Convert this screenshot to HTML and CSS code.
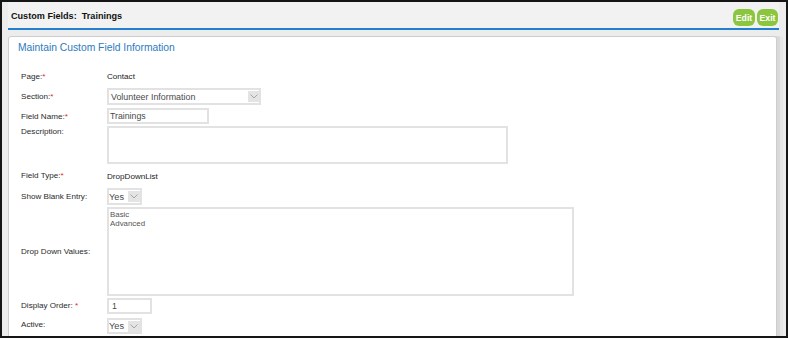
FILE: index.html
```html
<!DOCTYPE html>
<html>
<head>
<meta charset="utf-8">
<link rel="stylesheet" href="styles.css">
</head>
<body>
<div class="frame">
  <div class="header">
    <div class="header-title">Custom Fields:&nbsp; Trainings</div>
    <div class="header-actions">
      <span class="btn btn-edit">Edit</span>
      <span class="btn btn-exit">Exit</span>
    </div>
  </div>
  <div class="panel">
    <div class="panel-title">Maintain Custom Field Information</div>
    <div class="form">
      <div class="label">Page:<span class="req">*</span></div>
      <div class="value v-text">Contact</div>

      <div class="label">Section:<span class="req">*</span></div>
      <div class="value v-select"><div class="select select-wide"><span class="sel-text">Volunteer Information</span><span class="arrow"><svg width="8" height="5" viewBox="0 0 8 5"><path d="M0.5 0.5 L4 4 L7.5 0.5" fill="none" stroke="#a5a5a5" stroke-width="1"/></svg></span></div></div>

      <div class="label">Field Name:<span class="req">*</span></div>
      <div class="value v-name"><div class="input input-name">Trainings</div></div>

      <div class="label label-top">Description:</div>
      <div class="value v-desc"><div class="textarea desc"></div></div>

      <div class="label">Field Type:<span class="req">*</span></div>
      <div class="value v-text v-type">DropDownList</div>

      <div class="label">Show Blank Entry:</div>
      <div class="value v-select"><div class="select select-small"><span class="sel-text">Yes</span><span class="arrow"><svg width="8" height="5" viewBox="0 0 8 5"><path d="M0.5 0.5 L4 4 L7.5 0.5" fill="none" stroke="#a5a5a5" stroke-width="1"/></svg></span></div></div>

      <div class="label">Drop Down Values:</div>
      <div class="value v-list"><div class="textarea values">Basic<br>Advanced</div></div>

      <div class="label">Display Order:&nbsp;<span class="req">*</span></div>
      <div class="value v-order"><div class="input input-order">1</div></div>

      <div class="label">Active:</div>
      <div class="value v-active"><div class="select select-small select-short"><span class="sel-text">Yes</span><span class="arrow"><svg width="8" height="5" viewBox="0 0 8 5"><path d="M0.5 0.5 L4 4 L7.5 0.5" fill="none" stroke="#a5a5a5" stroke-width="1"/></svg></span></div></div>
    </div>
  </div>
</div>
</body>
</html>
```
FILE: styles.css
```css
* { box-sizing: border-box; }
html, body { margin: 0; padding: 0; }
body {
  width: 789px;
  height: 339px;
  font-family: "Liberation Sans", Arial, sans-serif;
  background: #fff;
  overflow: hidden;
}
.frame {
  width: 788px;
  height: 338px;
  border: 2px solid #151515;
  background: #ececec;
  overflow: hidden;
}
.header {
  height: 28px;
  margin: 0 7px 0 6px;
  display: flex;
  align-items: flex-start;
  justify-content: space-between;
  border-bottom: 2px solid #2280d0;
  background: #f2f2f2;
  padding: 0 1px 0 3px;
}
.header-title {
  font-size: 9.1px;
  font-weight: bold;
  color: #111;
  line-height: 10px;
  margin-top: 9px;
}
.header-actions {
  display: flex;
  gap: 2px;
  margin-top: 7px;
}
.btn {
  display: inline-flex;
  align-items: center;
  justify-content: center;
  height: 17px;
  background: #8cc63f;
  color: #fff;
  font-size: 8.7px;
  font-weight: bold;
  border-radius: 6px;
}
.btn-edit { width: 22px; }
.btn-exit { width: 21px; }
.panel {
  margin: 6px 9px 0 6px;
  background: #fff;
  border: 1px solid #cdcdcd;
  border-radius: 3px;
  box-shadow: 3px 0 0 #d9d9d9, 6px 0 0 #e6e6e6;
  height: 320px;
  padding: 4px 0 0 9px;
}
.panel-title {
  font-size: 10.3px;
  color: #2b7bc0;
  height: 14px;
  line-height: 14px;
  margin-bottom: 12px;
}
.form {
  display: grid;
  grid-template-columns: 86px 1fr;
  padding-left: 3px;
}
.label {
  font-size: 8.1px;
  color: #2a2a2a;
  display: flex;
  align-items: center;
  line-height: 10px;
}
.label-top { align-items: flex-start; padding-top: 1px; }
.req { color: #e0262b; }
.value {
  font-size: 8.1px;
  color: #222;
  display: flex;
  align-items: center;
}
.v-text { height: 19px; }
.v-type { height: 20px; }
.v-select { padding: 2px 0; }
.v-name { padding: 1px 0 2px; }
.v-desc { padding: 0 0 2px; }
.v-list { padding: 0; }
.v-order { padding: 2px 0; }
.v-active { padding: 2px 0 0; }
.select {
  display: flex;
  align-items: center;
  justify-content: space-between;
  height: 17px;
  border: 2px solid #e2e2e2;
  background: #fff;
  padding: 0 0 0 2px;
  font-size: 8.9px;
  color: #4a4a4a;
}
.select-wide { width: 154px; }
.select-small { width: 35px; padding-left: 0; font-size: 9.2px; }
.select-short { height: 16px; }
.arrow {
  width: 11px;
  height: 11px;
  background: #e4e4e4;
  display: flex;
  align-items: center;
  justify-content: center;
}
.select-small .arrow { width: 12px; }
.input {
  height: 16px;
  border: 2px solid #e2e2e2;
  padding: 0 1px;
  font-size: 8.75px;
  color: #4a4a4a;
  display: flex;
  align-items: center;
}
.input-name { width: 102px; }
.input-order { width: 45px; padding-left: 3px; }
.textarea {
  border: 2px solid #e2e2e2;
  background: #fff;
}
.desc { width: 401px; height: 38px; }
.values {
  width: 467px;
  height: 89px;
  font-size: 7.9px;
  color: #555;
  padding: 1px 1px;
  line-height: 9px;
}
```
